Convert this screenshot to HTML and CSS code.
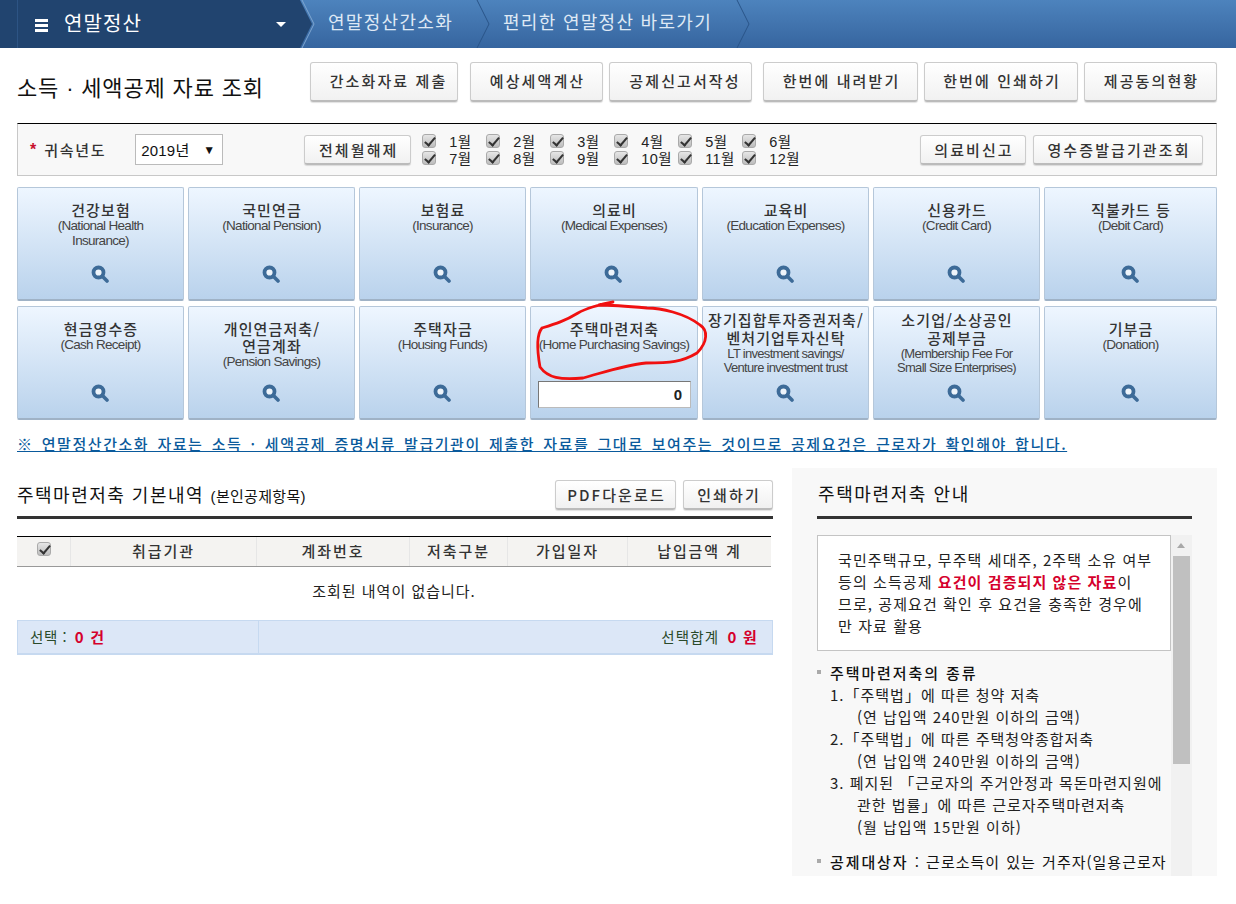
FILE: index.html
```html
<!DOCTYPE html>
<html lang="ko">
<head>
<meta charset="utf-8">
<title>연말정산</title>
<link rel="stylesheet" href="styles.css">
</head>
<body>
<svg class="defs" width="0" height="0" aria-hidden="true"><defs>
  <symbol id="mag" viewBox="0 0 18 18"><circle cx="7.5" cy="7.5" r="5" fill="#eef4fa" stroke="#3d6b98" stroke-width="3.8"/><path d="M11.5 11.5l4.5 4.5" stroke="#3d6b98" stroke-width="3.6" stroke-linecap="round"/></symbol>
</defs></svg>
<header class="topbar">
  <div class="topbar-main">
    <span class="burger"><i></i><i></i><i></i></span>
    <span class="topbar-title">연말정산</span>
    <span class="caret"></span>
  </div>
  <div class="crumb crumb-a">연말정산간소화</div>
  <div class="crumb crumb-b">편리한 연말정산 바로가기</div>
  <svg class="chevrons" width="760" height="48" viewBox="0 0 760 48" aria-hidden="true">
    <path d="M300 0L312 24L300 48" fill="#21446f"/>
    <path d="M302 0L314 24L302 48" fill="none" stroke="#7fa6d0" stroke-width="1"/>
    <path d="M477 0L489 24L477 48" fill="none" stroke="#2a5488" stroke-width="1"/>
    <path d="M737 0L749 24L737 48" fill="none" stroke="#2a5488" stroke-width="1"/>
  </svg>
</header>

<main class="page">
  <div class="title-row">
    <h1 class="page-title">소득 · 세액공제 자료 조회</h1>
    <div class="top-btns">
      <button class="btn w148">간소화자료 제출</button>
      <button class="btn w133 gap-l">예상세액계산</button>
      <button class="btn w143">공제신고서작성</button>
      <button class="btn w155 gap-m">한번에 내려받기</button>
      <button class="btn w154">한번에 인쇄하기</button>
      <button class="btn w133">제공동의현황</button>
    </div>
  </div>

  <section class="filter">
    <span class="req">*</span><span class="filter-label">귀속년도</span>
    <div class="year"><span>2019년</span><span class="year-arrow">▼</span></div>
    <button class="btn btn-sm w108">전체월해제</button>
    <div class="months">
      <label class="month"><input type="checkbox" checked>1월</label>
      <label class="month"><input type="checkbox" checked>2월</label>
      <label class="month"><input type="checkbox" checked>3월</label>
      <label class="month"><input type="checkbox" checked>4월</label>
      <label class="month"><input type="checkbox" checked>5월</label>
      <label class="month"><input type="checkbox" checked>6월</label>
      <label class="month"><input type="checkbox" checked>7월</label>
      <label class="month"><input type="checkbox" checked>8월</label>
      <label class="month"><input type="checkbox" checked>9월</label>
      <label class="month"><input type="checkbox" checked>10월</label>
      <label class="month"><input type="checkbox" checked>11월</label>
      <label class="month"><input type="checkbox" checked>12월</label>
    </div>
    <div class="filter-right">
      <button class="btn btn-sm w106">의료비신고</button>
      <button class="btn btn-sm w170">영수증발급기관조회</button>
    </div>
  </section>

  <section class="cards">
    <div class="card"><b>건강보험</b><span>(National Health<br>Insurance)</span><svg class="mag"><use href="#mag"/></svg></div>
    <div class="card"><b>국민연금</b><span>(National Pension)</span><svg class="mag"><use href="#mag"/></svg></div>
    <div class="card"><b>보험료</b><span>(Insurance)</span><svg class="mag"><use href="#mag"/></svg></div>
    <div class="card"><b>의료비</b><span>(Medical Expenses)</span><svg class="mag"><use href="#mag"/></svg></div>
    <div class="card"><b>교육비</b><span>(Education Expenses)</span><svg class="mag"><use href="#mag"/></svg></div>
    <div class="card"><b>신용카드</b><span>(Credit Card)</span><svg class="mag"><use href="#mag"/></svg></div>
    <div class="card"><b>직불카드 등</b><span>(Debit Card)</span><svg class="mag"><use href="#mag"/></svg></div>
    <div class="card"><b>현금영수증</b><span>(Cash Receipt)</span><svg class="mag"><use href="#mag"/></svg></div>
    <div class="card"><b>개인연금저축/<br>연금계좌</b><span>(Pension Savings)</span><svg class="mag"><use href="#mag"/></svg></div>
    <div class="card"><b>주택자금</b><span>(Housing Funds)</span><svg class="mag"><use href="#mag"/></svg></div>
    <div class="card"><b>주택마련저축</b><span>(Home Purchasing Savings)</span><div class="amount">0</div></div>
    <div class="card card-tight"><b>장기집합투자증권저축/<br>벤처기업투자신탁</b><span>LT investment savings/<br>Venture investment trust</span><svg class="mag"><use href="#mag"/></svg></div>
    <div class="card card-tight"><b>소기업/소상공인<br>공제부금</b><span>(Membership Fee For<br>Small Size Enterprises)</span><svg class="mag"><use href="#mag"/></svg></div>
    <div class="card"><b>기부금</b><span>(Donation)</span><svg class="mag"><use href="#mag"/></svg></div>
  </section>

  <a class="notice" href="#">※ 연말정산간소화 자료는 소득 · 세액공제 증명서류 발급기관이 제출한 자료를 그대로 보여주는 것이므로 공제요건은 근로자가 확인해야 합니다.</a>

  <div class="lower">
    <section class="detail">
      <div class="detail-head">
        <h2 class="sec-title">주택마련저축 기본내역 <small>(본인공제항목)</small></h2>
        <div class="detail-btns">
          <button class="btn btn-sm w121">PDF다운로드</button>
          <button class="btn btn-sm w90">인쇄하기</button>
        </div>
      </div>
      <div class="table-head">
        <div><input type="checkbox" checked></div>
        <div>취급기관</div><div>계좌번호</div><div>저축구분</div><div>가입일자</div><div>납입금액 계</div>
      </div>
      <div class="empty">조회된 내역이 없습니다.</div>
      <div class="sum">
        <div class="sum-l">선택 : <em>0 건</em></div>
        <div class="sum-r">선택합계 <em>0 원</em></div>
      </div>
    </section>

    <aside class="guide">
      <h2 class="guide-title">주택마련저축 안내</h2>
      <div class="guide-scroll">
        <div class="guide-body">
          <div class="guide-box">국민주택규모, 무주택 세대주, 2주택 소유 여부<br>등의 소득공제 <em>요건이 검증되지 않은 자료</em>이<br>므로, 공제요건 확인 후 요건을 충족한 경우에<br>만 자료 활용</div>
          <h3 class="guide-h">주택마련저축의 종류</h3>
          <ol class="guide-list">
            <li>1.「주택법」에 따른 청약 저축<br><span>(연 납입액 240만원 이하의 금액)</span></li>
            <li>2.「주택법」에 따른 주택청약종합저축<br><span>(연 납입액 240만원 이하의 금액)</span></li>
            <li>3. 폐지된 「근로자의 주거안정과 목돈마련지원에<br><span>관한 법률」에 따른 근로자주택마련저축</span><br><span>(월 납입액 15만원 이하)</span></li>
          </ol>
          <p class="guide-h guide-p"><b>공제대상자</b> : 근로소득이 있는 거주자(일용근로자</p>
        </div>
        <div class="scrollbar"><i class="sb-up"></i><i class="sb-thumb"></i></div>
      </div>
    </aside>
  </div>
</main>

<svg class="scribble" width="200" height="90" viewBox="530 295 200 90" aria-hidden="true">
  <path d="M613 302C600 304 585 309 578 313C565 321 555 324 542 328C536 335 537 350 540 367C548 378 560 380 583 378C605 372 625 365 646 363C670 363 682 362 697 353C708 342 708 330 700 325C685 313 660 308 647 308C625 306 608 305 599 305" fill="none" stroke="#f01010" stroke-width="2.8" stroke-linecap="round"/>
</svg>
</body>
</html>
```
FILE: styles.css
```css
* { box-sizing: border-box; }
html, body { margin: 0; padding: 0; }
body {
  position: relative;
  width: 1236px;
  height: 904px;
  overflow: hidden;
  background: #fff;
  color: #222;
  font: 14px "Liberation Sans", "Noto Sans CJK KR", sans-serif;
}
.defs { position: absolute; }

/* top bar */
.topbar {
  position: relative;
  display: flex;
  height: 48px;
  background: linear-gradient(#4d83bd, #36659f);
  color: #dfe9f5;
}
.topbar-main {
  display: flex;
  align-items: center;
  width: 300px;
  padding-left: 35px;
  background: linear-gradient(90deg, #21446f 17px, #2d5484 17px, #2d5484 18px, #21446f 18px);
  color: #fff;
}
.burger { display: flex; flex-direction: column; gap: 2px; width: 13px; margin-top: 2px; }
.burger i { height: 3px; background: #fff; }
.topbar-title { margin-left: 16px; font-size: 20px; letter-spacing: 1.1px; margin-top: -3px; }
.caret {
  margin-left: auto;
  margin-right: 14px;
  border: 5px solid transparent;
  border-top-color: #fff;
  border-bottom: 0;
}
.crumb { font-size: 18px; letter-spacing: 1.3px; line-height: 46px; white-space: nowrap; }
.crumb-a { margin-left: 28px; width: 175px; }
.crumb-b { width: 260px; }
.chevrons { position: absolute; left: 0; top: 0; }

/* main */
.page { padding: 14px 19px 0 17px; }
.title-row { display: flex; justify-content: space-between; align-items: flex-start; height: 61px; }
.page-title { margin: 8px 0 0; font-size: 22px; font-weight: 400; letter-spacing: .85px; color: #111; white-space: nowrap; }
.top-btns { display: flex; gap: 6px; }
.gap-l { margin-left: 6px; }
.gap-m { margin-left: 5px; }
.btn {
  height: 40px;
  padding: 0 0 2px 2px;
  border: 1px solid #ccc;
  border-bottom: 2px solid #bbb;
  border-radius: 3px;
  background: linear-gradient(#fff, #f1f1f1);
  font: 500 15px "Noto Sans CJK KR", sans-serif;
  letter-spacing: 2.1px;
  color: #333;
  box-shadow: 0 1px 1px rgba(0,0,0,.12);
}
.btn-sm { height: 30px; padding-bottom: 0; }
.w148, .w143 { padding-left: 9px; }
.w148 { width: 148px; } .w133 { width: 133px; } .w143 { width: 143px; }
.w155 { width: 155px; } .w154 { width: 154px; } .w108 { width: 107px; }
.w106 { width: 106px; } .w170 { width: 170px; } .w121 { width: 121px; } .w90 { width: 90px; }

/* filter */
.filter {
  display: flex;
  align-items: center;
  height: 53px;
  border: 1px solid #c8c8c8;
  border-top-color: #000;
  background: #f8f8f8;
}
.req { margin-left: 12px; color: #c8102e; font-weight: 700; font-size: 16px; }
.filter-label { margin-left: 8px; width: 91px; font: 500 15px "Noto Sans CJK KR", sans-serif; letter-spacing: 1.7px; color: #333; }
.year {
  display: flex;
  justify-content: space-between;
  align-items: center;
  width: 88px;
  height: 31px;
  padding: 0 7px 0 5px;
  border: 1px solid #bbb;
  background: #fff;
  font-size: 15px;
  letter-spacing: .2px;
  color: #111;
}
.year-arrow { font-size: 12px; }
.filter .w108 { margin-left: 81px; }
.months {
  display: grid;
  grid-template-columns: repeat(6, 64px);
  grid-auto-rows: 17px;
  width: 385px;
  margin: -1px 0 0 11px;
}
.month { display: flex; align-items: center; gap: 13px; font-size: 14.5px; color: #222; letter-spacing: .4px; white-space: nowrap; }
input[type=checkbox] {
  appearance: none;
  position: relative;
  flex: none;
  width: 14px;
  height: 14px;
  margin: 0;
  border: 1px solid #aaa;
  border-radius: 3px;
  background: linear-gradient(#e6e6e6, #bdbdbd);
}
input[type=checkbox]::after {
  content: "";
  position: absolute;
  left: 4px;
  top: 0;
  width: 4px;
  height: 9px;
  border: solid #333;
  border-width: 0 2px 2px 0;
  transform: rotate(40deg);
}
.filter-right { display: flex; gap: 7px; margin-left: auto; margin-right: 13px; }

/* cards */
.cards {
  display: grid;
  grid-template-columns: 167px 167px 167px 168px 167px 167px 173px;
  grid-auto-rows: 114px;
  column-gap: 4px;
  row-gap: 5px;
  margin-top: 11px;
}
.card {
  position: relative;
  display: flex;
  flex-direction: column;
  align-items: center;
  padding: 13px 2px 0;
  border: 1px solid #b5c7da;
  border-bottom: 2px solid #9fb2c6;
  border-radius: 2px;
  background: linear-gradient(#eef6ff, #b9d2ec);
  text-align: center;
  color: #222;
}
.card b { padding-left: 1px; font: 500 15px/17px "Noto Sans CJK KR", sans-serif; letter-spacing: 1.1px; color: #333; white-space: nowrap; }
.card span { font-size: 13.5px; line-height: 15px; letter-spacing: -.7px; color: #444; white-space: nowrap; }
.card-tight { padding-top: 4px; }
.card-tight b { line-height: 18px; }
.card-tight span { line-height: 14px; font-size: 13px; }
.mag { position: absolute; left: 50%; bottom: 16px; width: 18px; height: 18px; margin-left: -10px; }
.amount {
  position: absolute;
  left: 7px;
  bottom: 10px;
  width: 153px;
  height: 27px;
  padding-right: 8px;
  border: 1px solid #bbb;
  border-top-color: #777;
  border-left-color: #777;
  background: #fff;
  text-align: right;
  font: 700 15px/26px "Liberation Sans", sans-serif;
  color: #222;
}

.notice {
  display: block;
  margin-top: 14px;
  color: #0a5a9c;
  font: 500 15px/20px "Noto Sans CJK KR", sans-serif;
  letter-spacing: 1.54px;
  word-spacing: 2.5px;
  white-space: nowrap;
}

/* lower */
.lower { display: flex; justify-content: space-between; margin-top: 14px; }
.detail { width: 756px; margin-top: 12px; }
.detail-head {
  display: flex;
  justify-content: space-between;
  height: 39px;
  border-bottom: 3px solid #333;
}
.sec-title { margin: 1px 0 0; font-size: 18px; font-weight: 400; letter-spacing: 1.5px; color: #111; }
.sec-title small { font-size: 15px; letter-spacing: .3px; }
.detail-btns { display: flex; gap: 7px; }
.table-head {
  display: grid;
  grid-template-columns: 53px 186px 153px 98px 120px 144px;
  width: 754px;
  height: 31px;
  margin-top: 17px;
  border-top: 1px solid #000;
  border-bottom: 1px solid #999;
  background: #f4f3f1;
  font: 500 15px/28px "Noto Sans CJK KR", sans-serif;
  letter-spacing: 1.9px;
  text-align: center;
  color: #333;
}
.table-head > div { border-left: 1px solid #e6e6e6; }
.table-head > div:first-child { border: 0; padding-top: 1px; line-height: 24px; }
.empty { width: 754px; height: 53px; line-height: 47px; text-align: center; font-size: 15px; letter-spacing: 1px; font-family: "Noto Sans CJK KR", sans-serif; color: #222; }
.sum {
  display: flex;
  height: 35px;
  border: 1px solid #c6d9f0;
  border-bottom-width: 2px;
  background: #dce7f7;
  font-size: 14.5px;
  letter-spacing: 1.2px;
  line-height: 31px;
  color: #2a4a2a;
  font-family: "Noto Sans CJK KR", sans-serif;
}
.sum em { margin-left: 3px; font-style: normal; font-weight: 700; color: #d5002c; font-size: 15px; letter-spacing: 1.2px; }
.sum-l { width: 241px; padding-left: 12px; border-right: 1px solid #c6d9f0; letter-spacing: .6px; }
.sum-r { flex: 1; padding-right: 14px; text-align: right; }

.guide {
  width: 425px;
  height: 408px;
  padding: 0 25px;
  background: #f8f8f8;
}
.guide-title {
  height: 51px;
  margin: 0;
  padding: 12px 0 0 1px;
  border-bottom: 3px solid #333;
  font-size: 18px;
  font-weight: 400;
  letter-spacing: 1.6px;
  color: #111;
}
.guide-scroll { display: flex; justify-content: space-between; height: 341px; margin-top: 16px; overflow: hidden; }
.guide-body { width: 354px; font-size: 15px; line-height: 22px; letter-spacing: 1px; font-family: "Noto Sans CJK KR", sans-serif; color: #222; white-space: nowrap; }
.guide-box {
  height: 116px;
  padding: 13px 0 0 20px;
  border: 1px solid #c4c4c4;
  background: #fff;
  letter-spacing: 1.08px;
}
.guide-box em { font-style: normal; font-weight: 700; color: #d5002c; }
.guide-h {
  position: relative;
  margin: 11px 0 0;
  padding-left: 13px;
  font-size: 15px;
  font-weight: 500;
  letter-spacing: 1.9px;
  color: #111;
}
.guide-h::before {
  content: "";
  position: absolute;
  left: 0;
  top: 8px;
  width: 4px;
  height: 4px;
  background: #aaa;
}
.guide-list { margin: 0; padding: 0 0 0 13px; list-style: none; }
.guide-list span { padding-left: 27px; }
.guide-p { margin-top: 13px; font-weight: 400; letter-spacing: 1px; word-spacing: 1px; }
.guide-p b { font-weight: 500; letter-spacing: 1.9px; }
.scrollbar { position: relative; width: 21px; background: #f1f1f1; }
.sb-up {
  position: absolute;
  left: 6px;
  top: 8px;
  border: 4.5px solid transparent;
  border-bottom: 5px solid #a8a8a8;
  border-top: 0;
}
.sb-thumb { position: absolute; left: 2px; top: 21px; width: 17px; height: 208px; background: #c0c0c0; }

.scribble { position: absolute; left: 530px; top: 295px; pointer-events: none; }
```
